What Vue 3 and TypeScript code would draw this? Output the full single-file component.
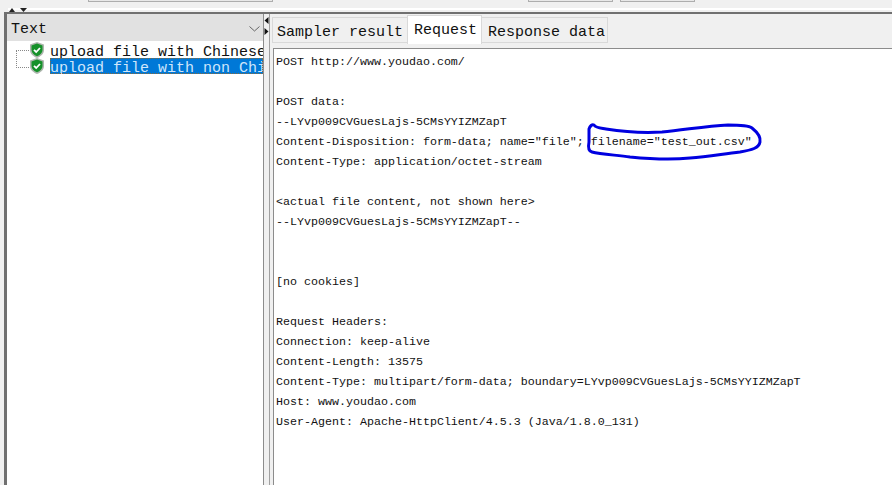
<script setup lang="ts">
const requestLines: string[] = [
  'POST http://www.youdao.com/',
  '',
  'POST data:',
  '--LYvp009CVGuesLajs-5CMsYYIZMZapT',
  'Content-Disposition: form-data; name="file"; filename="test_out.csv"',
  'Content-Type: application/octet-stream',
  '',
  '<actual file content, not shown here>',
  '--LYvp009CVGuesLajs-5CMsYYIZMZapT--',
  '',
  '',
  '[no cookies]',
  '',
  'Request Headers:',
  'Connection: keep-alive',
  'Content-Length: 13575',
  'Content-Type: multipart/form-data; boundary=LYvp009CVGuesLajs-5CMsYYIZMZapT',
  'Host: www.youdao.com',
  'User-Agent: Apache-HttpClient/4.5.3 (Java/1.8.0_131)',
]
const rows = [
  { label: 'upload file with Chinese', selected: false },
  { label: 'upload file with non Chinese', selected: true },
]
</script>

<template>
  <div class="app">
    <div class="toolbar">
      <span class="stub stub-a"></span>
      <span class="stub stub-b"></span>
      <span class="stub stub-c"></span>
      <span class="highlight"></span>
      <span class="arrows">
        <svg width="18" height="5" viewBox="0 0 18 5"><path d="M3 0 L0 4 H6 Z M11 0 H18 L14.500 4 Z" fill="#222" /></svg>
      </span>
    </div>
    <div class="main">
      <aside class="left">
        <div class="combo">
          <span>Text</span>
          <svg class="chevron" width="11" height="6" viewBox="0 0 11 6"><path d="M0.500 0.500 L5.500 5 L10.500 0.500" fill="none" stroke="#666" stroke-width="1" /></svg>
        </div>
        <div class="tree">
          <span class="guides"></span>
          <div v-for="r in rows" :key="r.label" class="row">
            <svg class="shield" width="16" height="16" viewBox="0 0 16 16">
              <path d="M8 0 L15 2.500 V8 C15 12 11.500 14.500 8 16 C4.500 14.500 1 12 1 8 V2.500 Z" fill="#aeb6ae" />
              <path d="M8 1.500 L13.500 3.500 V8 C13.500 11 11 13 8 14.300 C5 13 2.500 11 2.500 8 V3.500 Z" fill="#16912a" />
              <path d="M5 7.800 L7.200 10 L11 6" fill="none" stroke="#fff" stroke-width="1.800" />
            </svg>
            <div class="label" :class="{ selected: r.selected }">{{ r.label }}</div>
          </div>
        </div>
      </aside>
      <div class="splitter">
        <svg width="5" height="18" viewBox="0 0 5 18"><path d="M4.500 0 V7 L0.500 3.500 Z M0.500 11 L4.500 14.500 L0.500 18 Z" fill="#111" /></svg>
      </div>
      <section class="right">
        <div class="tabs">
          <div class="tab first">Sampler result</div>
          <div class="tab active">Request</div>
          <div class="tab last">Response data</div>
        </div>
        <div class="content">
          <div v-for="(line, i) in requestLines" :key="i" class="line">{{ line }}</div>
          <svg class="ink" width="180" height="42" viewBox="585 122 180 42">
            <path d="M589 129 C590 126 592 124 594 125 C596 128 600 128 606 129 C625 132 645 133 662 132 C685 130 705 126 728 125 C738 125 748 125 752 128 C757 132 761 137 760 142 C759 148 752 150 740 152 C722 154 708 157 690 158 C672 160 650 159 630 157 C615 155 600 154 592 152 C588 151 588 147 589 142 Z" fill="none" stroke="#0000e0" stroke-width="3" stroke-linejoin="round" />
          </svg>
        </div>
      </section>
    </div>
  </div>
</template>

<style>
html, body { margin: 0; background: #f0f0f0; }
</style>

<style scoped>
.app {
  width: 892px;
  height: 485px;
  overflow: hidden;
  display: flex;
  flex-direction: column;
  background: #f0f0f0;
  font-family: "Liberation Mono", monospace;
  color: #111;
}
.toolbar {
  position: relative;
  height: 12px;
  flex: none;
  border-bottom: 2px solid #707070;
  margin-left: 4px;
}
.stub {
  position: absolute;
  top: -2px;
  border: 1px solid #adadad;
  background: #e8e8e8;
  box-sizing: border-box;
  height: 4px;
}
.stub-a { left: 84px; width: 185px; }
.stub-b { left: 524px; width: 85px; }
.stub-c { left: 616px; width: 75px; }
.highlight {
  position: absolute;
  top: 8px;
  left: 4px;
  right: 0;
  height: 2px;
  background: #fff;
}
.arrows {
  position: absolute;
  left: 5px;
  top: 8px;
  line-height: 0;
}
.main {
  flex: 1;
  display: flex;
  min-height: 0;
  margin-left: 4px;
  border-left: 3px solid #707070;
}
.left {
  width: 257px;
  flex: none;
  display: flex;
  flex-direction: column;
  border-right: 1px solid #8c8c8c;
  box-sizing: border-box;
  overflow: hidden;
}
.combo {
  height: 27px;
  flex: none;
  background: #e1e1e1;
  display: flex;
  align-items: center;
  justify-content: space-between;
  padding: 3px 3px 0 4px;
  box-sizing: border-box;
  font-size: 15px;
}
.tree {
  flex: 1;
  background: #fff;
  padding-top: 1px;
  position: relative;
}
.guides {
  position: absolute;
  left: 9px;
  top: 9px;
  width: 12px;
  height: 16px;
  border-left: 1px dotted #888;
  border-top: 1px dotted #888;
  border-bottom: 1px dotted #888;
}
.row {
  height: 16px;
  display: flex;
  align-items: center;
  white-space: nowrap;
  font-size: 15px;
  padding-left: 22px;
  position: relative;
}
.shield { flex: none; margin-right: 5px; }
.label {
  flex: 1;
  min-width: 0;
  height: 16px;
  padding-top: 3px;
  box-sizing: border-box;
  line-height: 15px;
  overflow: hidden;
}
.label.selected {
  background: #0078d7;
  color: #cfe6fb;
  outline: 1px dotted #8a6a3a;
  outline-offset: -1px;
}
.splitter {
  width: 6px;
  flex: none;
  display: flex;
  flex-direction: column;
  align-items: center;
  padding-top: 3px;
  box-sizing: border-box;
  border-right: 1px solid #a0a0a0;
}
.right {
  flex: 1;
  min-width: 0;
  display: flex;
  flex-direction: column;
  background: #f0f0f0;
  padding-left: 2px;
}
.tabs {
  height: 29px;
  flex: none;
  display: flex;
  align-items: flex-start;
  font-size: 15px;
  box-sizing: border-box;
  position: relative;
}
.tab {
  height: 26px;
  margin-top: 3px;
  line-height: 30px;
  background: #f0f0f0;
  border: 1px solid #d9d9d9;
  box-sizing: border-box;
}
.tab.first { padding: 0 4px; }
.tab.last { padding: 0 2px 0 6px; margin-left: -1px; }
.tab.active {
  height: 29px;
  margin-top: 1px;
  margin-left: -1px;
  line-height: 29px;
  background: #fff;
  padding: 0 4px 0 6px;
  border-bottom: 0;
  position: relative;
  z-index: 1;
}
.content {
  flex: 1;
  position: relative;
  background: #fff;
  border-left: 1px solid #8c8c8c;
  border-top: 1px solid #8c8c8c;
  margin: 5px 0 0 1px;
  padding: 3px 0 0 2px;
  font-size: 11.670px;
  color: #111;
}
.line {
  height: 20px;
  line-height: 20px;
  white-space: pre;
}
.ink {
  position: absolute;
  left: 311px;
  top: 73px;
  overflow: visible;
}
</style>
